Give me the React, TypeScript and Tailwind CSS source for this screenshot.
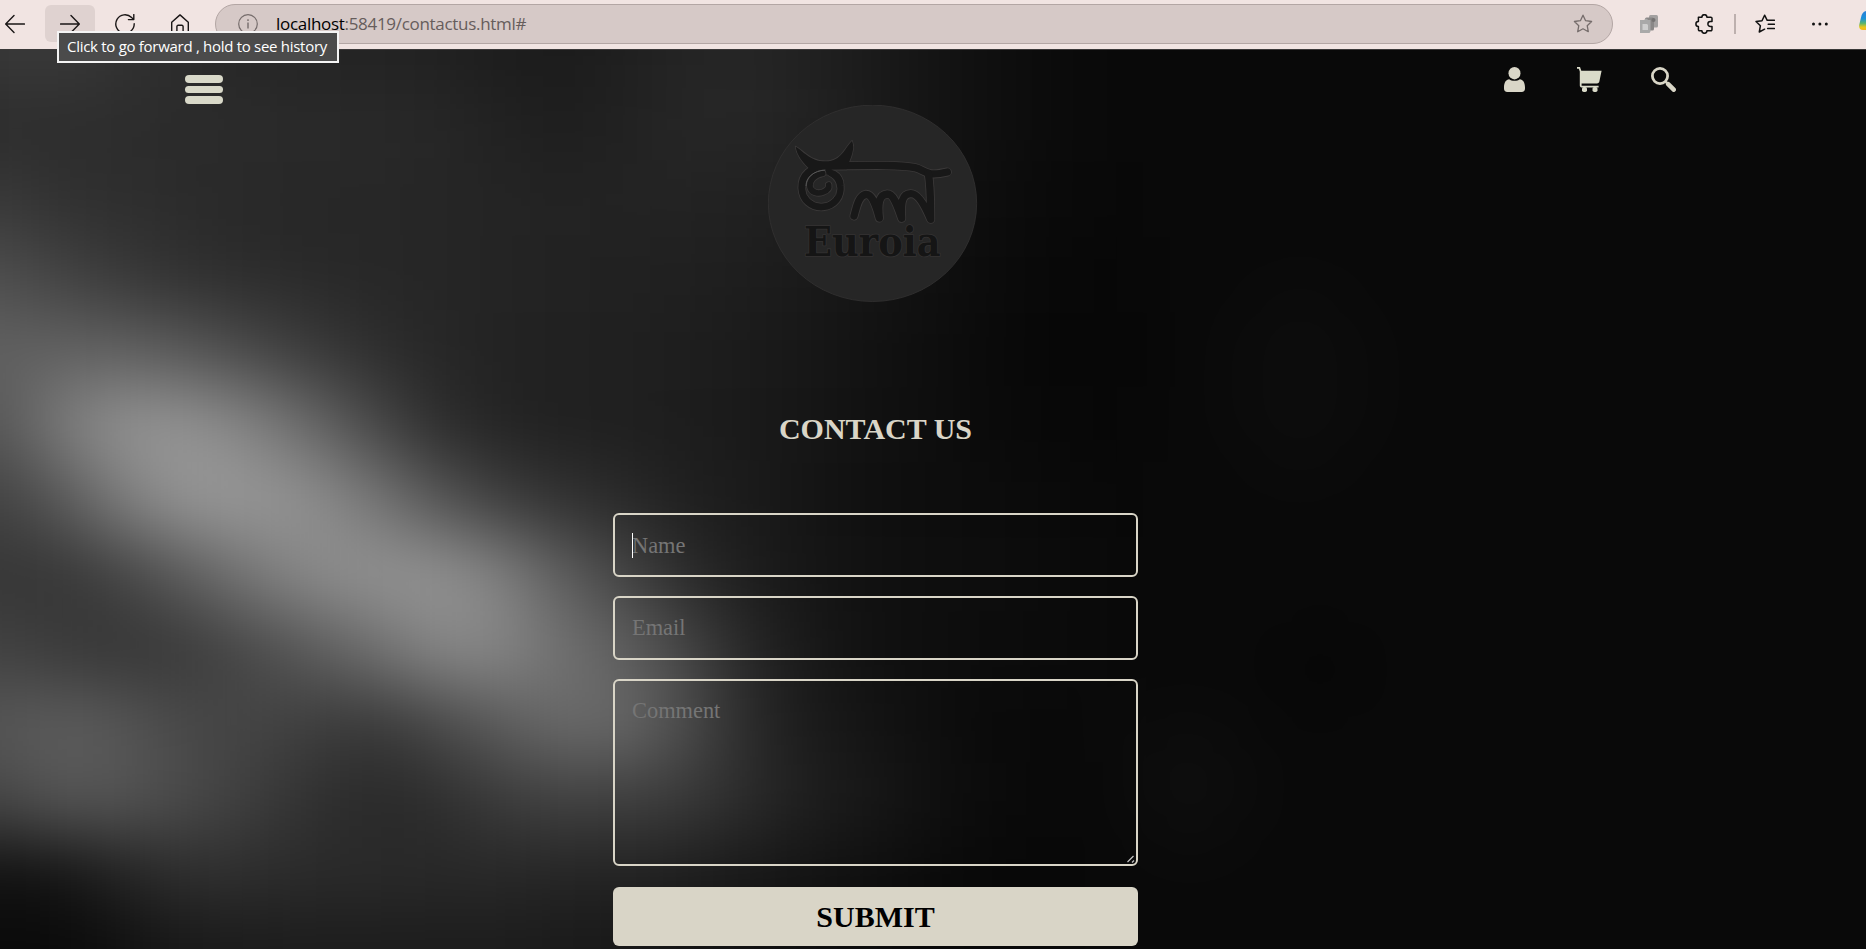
import React from "react";

const CELL_W = 62;
const CELL_H = 75;

// Brightness samples of the out-of-focus backdrop, one row per 75px, one column per 62px.
const SHADES: number[][] = [
  [56, 58, 50, 44, 38, 36, 35, 33, 29, 27, 31, 36, 38, 33, 27, 20, 15, 11, 9],
  [44, 46, 44, 43, 43, 42, 41, 39, 34, 30, 33, 38, 39, 34, 27, 20, 15, 11, 9],
  [57, 48, 46, 43, 40, 39, 39, 38, 36, 35, 35, 35, 33, 30, 24, 18, 13, 10, 8],
  [78, 66, 56, 48, 44, 41, 39, 38, 36, 34, 33, 32, 30, 26, 21, 16, 11, 8, 7],
  [97, 97, 96, 87, 72, 58, 46, 39, 35, 33, 32, 30, 27, 23, 18, 14, 10, 7, 6],
  [86, 124, 147, 148, 132, 105, 73, 46, 36, 32, 31, 29, 26, 22, 17, 14, 10, 8, 7],
  [66, 88, 126, 150, 152, 144, 120, 88, 63, 50, 42, 32, 27, 21, 16, 13, 12, 10, 8],
  [54, 54, 68, 92, 118, 138, 146, 147, 132, 96, 70, 44, 30, 22, 17, 14, 13, 11, 9],
  [66, 58, 53, 58, 72, 90, 110, 134, 136, 114, 97, 72, 40, 25, 17, 14, 12, 11, 9],
  [86, 94, 86, 72, 68, 62, 56, 70, 90, 105, 105, 78, 44, 27, 20, 14, 10, 9, 10],
  [70, 86, 84, 74, 62, 49, 41, 45, 58, 65, 63, 58, 44, 31, 24, 16, 11, 8, 9],
  [17, 20, 35, 46, 46, 42, 42, 40, 40, 37, 35, 30, 25, 20, 15, 11, 8, 8, 9],
  [10, 10, 16, 24, 27, 28, 28, 28, 28, 26, 24, 20, 17, 14, 11, 9, 8, 8, 9],
];

function Backdrop() {
  return (
    <svg
      className="absolute inset-0 h-full w-full"
      viewBox="0 0 1866 900"
      preserveAspectRatio="none"
      aria-hidden="true"
    >
      <defs>
        <filter
          id="soft"
          filterUnits="userSpaceOnUse"
          x="-200"
          y="-200"
          width="2266"
          height="1300"
          colorInterpolationFilters="sRGB"
        >
          <feGaussianBlur stdDeviation="33" />
        </filter>
      </defs>
      <rect width="1866" height="900" fill="#090909" />
      <g filter="url(#soft)" shapeRendering="crispEdges">
        <rect x="-200" y="-200" width="2266" height="1300" fill="#090909" />
        {SHADES.map((row, r) =>
          row.map((v, c) => {
            const x = c === 0 ? -200 : c * CELL_W - CELL_W / 2;
            const right = c * CELL_W + CELL_W / 2;
            const y = r === 0 ? -200 : r * CELL_H - CELL_H / 2;
            const bottom = r === SHADES.length - 1 ? 1100 : r * CELL_H + CELL_H / 2;
            return (
              <rect
                key={r + "-" + c}
                x={x}
                y={y}
                width={right - x + 1}
                height={bottom - y + 1}
                fill={`rgb(${v},${v},${v})`}
              />
            );
          }),
        )}
        <ellipse cx="1300" cy="330" rx="70" ry="100" fill="#0c0c0c" />
        <ellipse cx="1190" cy="735" rx="60" ry="70" fill="#0d0d0d" />
        <ellipse cx="1320" cy="620" rx="50" ry="50" fill="#070707" />
      </g>
    </svg>
  );
}

function ArrowIcon({ flip = false }: { flip?: boolean }) {
  return (
    <svg
      width="20"
      height="20"
      viewBox="0 0 20 20"
      fill="none"
      stroke="#1a1616"
      strokeWidth="1.4"
      strokeLinecap="round"
      strokeLinejoin="round"
      className={flip ? "rotate-180" : ""}
    >
      <path d="M19.4 10H.8M9 1.6L.7 10L9 18.4" />
    </svg>
  );
}

function StarPath() {
  return (
    <path d="M10 1.2l2.6 5.5 6 .8-4.4 4.2 1.1 6L10 14.8l-5.3 2.9 1.1-6L1.4 7.5l6-.8z" />
  );
}

function BrowserBar() {
  return (
    <div className="relative z-10 flex h-[49px] shrink-0 items-start overflow-hidden bg-[#f1e4e2]">
      <div className="mt-[14px] ml-[5px] h-5 w-5">
        <ArrowIcon />
      </div>
      <div className="mt-[5px] ml-5 flex h-[37px] w-[50px] justify-center rounded-md bg-[#dfd2d0] pt-[9px]">
        <ArrowIcon flip />
      </div>
      <svg
        className="mt-[14px] ml-5"
        width="20"
        height="20"
        viewBox="0 0 20 20"
        fill="none"
        stroke="#1a1616"
        strokeWidth="1.4"
        strokeLinecap="round"
        strokeLinejoin="round"
      >
        <path d="M19.2 9.8A9.2 9.2 0 1 1 16.6 3.6L18.6 5.4M18.8.6V5.6H13.4" />
      </svg>
      <svg
        className="mt-[14px] ml-[35px]"
        width="20"
        height="20"
        viewBox="0 0 20 20"
        fill="none"
        stroke="#1a1616"
        strokeWidth="1.4"
        strokeLinejoin="round"
      >
        <path d="M1.7 8.2L10 .9l8.3 7.3V18.5h-5.2v-6a1.2 1.2 0 0 0-1.2-1.2H8.1A1.2 1.2 0 0 0 6.9 12.500v6H1.700z" />
      </svg>
      <div className="mt-1 ml-[25px] flex h-10 w-[1398px] items-center rounded-full border border-[#b3a6a4] bg-[#d6c9c7] pr-[19px] pl-[22px]">
        <svg
          width="20"
          height="20"
          viewBox="0 0 20 20"
          fill="none"
          stroke="#756c6b"
          strokeWidth="1.2"
        >
          <circle cx="10" cy="10" r="9.3" />
          <path d="M10 8.600v6M10 5.300v1.600" strokeWidth="1.4" />
        </svg>
        <div
          className="ml-[18px] grow text-[17px] leading-6 tracking-[-0.3px] whitespace-nowrap text-[#665d5c]"
          style={{ fontFamily: '"Open Sans", sans-serif' }}
        >
          <span className="text-black">localhost</span>:58419/contactus.html#
        </div>
        <svg
          width="20"
          height="20"
          viewBox="0 0 20 20"
          fill="none"
          stroke="#756c6b"
          strokeWidth="1.300"
          strokeLinejoin="round"
        >
          <StarPath />
        </svg>
      </div>
      <svg className="mt-[15px] ml-[27px]" width="18" height="18" viewBox="0 0 18 18">
        <rect x="9" y="0" width="9" height="12.500" rx="1.500" fill="#a3a0a0" />
        <rect x="5" y="2.500" width="9" height="13" rx="1.500" fill="#8a8787" />
        <circle cx="13.500" cy="5" r="2" fill="#757272" />
        <path d="M0 5H4L5.500 3.800H7L8 5H10.500V16.500L9.500 18H0Z" fill="#a9a9a9" />
        <path d="M2.500 9H7L8 10V15H2.500Z" fill="#cfcfcf" />
      </svg>
      <svg
        className="mt-[14px] ml-[36px]"
        width="20"
        height="20"
        viewBox="0 0 20 20"
        fill="none"
        stroke="#111"
        strokeWidth="1.500"
        strokeLinejoin="round"
      >
        <path d="M4.400 3.200H7.900A2.500 2.500 0 0 1 12.900 3.200H16.800A1.200 1.200 0 0 1 18 4.400V7.600H16.300A2.400 2.400 0 0 0 16.300 12.400H18V15.600A1.200 1.200 0 0 1 16.800 16.800H12.900A2.500 2.500 0 0 1 7.900 16.800H5.600A1.200 1.200 0 0 1 4.400 15.600V12.500A2.500 2.500 0 0 1 4.400 7.500Z" />
      </svg>
      <div className="mt-[14px] ml-[20px] h-5 w-[2px] bg-[#bdb0ae]" />
      <svg
        className="mt-[14px] ml-[19px]"
        width="20"
        height="20"
        viewBox="0 0 20 20"
        fill="none"
        stroke="#111"
        strokeWidth="1.500"
        strokeLinecap="round"
        strokeLinejoin="round"
      >
        <path d="M12.200 6.300L9.600 1.200 7 6.700 1 7.500 5.400 11.700 4.300 18 9.600 15.200M13.200 10.300H19.400M12.200 6.300H19.400M12.600 14.400H19.400" />
      </svg>
      <svg className="mt-[14px] ml-[36px]" width="18" height="20" viewBox="0 0 18 20" fill="#111">
        <circle cx="2.500" cy="10" r="1.500" />
        <circle cx="8.900" cy="10" r="1.500" />
        <circle cx="15.300" cy="10" r="1.500" />
      </svg>
      <svg className="mt-[10px] ml-[30px] shrink-0" width="7" height="21" viewBox="0 0 7 21">
        <defs>
          <linearGradient id="assist" x1="0" y1="0" x2="0" y2="1">
            <stop offset="0" stopColor="#2b7fd8" />
            <stop offset=".4" stopColor="#1c92d8" />
            <stop offset=".65" stopColor="#5ab56e" />
            <stop offset=".85" stopColor="#e8c61c" />
            <stop offset="1" stopColor="#f5b81a" />
          </linearGradient>
        </defs>
        <path d="M7 1C4 1.500 2.800 4 2 7.500L.3 14.500C-.4 18 .8 19.800 4 20H7Z" fill="url(#assist)" />
      </svg>
    </div>
  );
}

function Logo() {
  const ram = (
    <>
      <path d="M231 228C360 226 455 224 495 233C528 241 525 262 592 246" />
      <path d="M535 250C543 300 541 340 542 388C522 340 502 310 482 311C455 312 452 340 455 385C440 340 430 312 412 312C385 314 384 345 388 384C376 340 366 312 347 313C325 318 320 350 312 378" />
      <path d="M235 232C180 228 155 258 156 294C158 330 185 352 218 350C255 347 273 318 270 286C268 252 240 246 218 248" />
    </>
  );
  const spiral =
    "M218 250C192 254 176 274 180 291C184 309 206 312 220 306C232 301 238 294 236 285";
  const horns =
    "M137 170C160 182 180 215 228 214C275 214 285 172 306 153C316 175 302 205 296 220L290 238H180C160 220 140 195 137 170Z";
  return (
    <svg width="210" height="198" viewBox="54 45 630 594" fill="none" className="ml-[768px] block">
      <ellipse cx="367.500" cy="340" rx="312.500" ry="294.500" fill="#262626" stroke="#323131" strokeWidth="2.500" />
      <g stroke="#3b3939" strokeWidth="27" strokeLinecap="round" strokeLinejoin="round">
        {ram}
        <path d={horns} strokeWidth="5" />
      </g>
      <g stroke="#181818" strokeWidth="22" strokeLinecap="round" strokeLinejoin="round">
        {ram}
      </g>
      <path d={horns} fill="#181818" />
      <ellipse cx="214" cy="296" rx="47" ry="44" fill="#262626" stroke="#3b3939" strokeWidth="2.500" />
      <g strokeLinecap="round" strokeLinejoin="round">
        <path d={spiral} stroke="#3b3939" strokeWidth="22" />
        <path d={spiral} stroke="#191919" strokeWidth="17" />
      </g>
      <path d="M168 288C168 262 190 243 226 240" stroke="#585858" strokeWidth="3" />
      <text
        x="162"
        y="497"
        textLength="410"
        lengthAdjust="spacingAndGlyphs"
        style={{ fontFamily: '"DejaVu Serif", serif', paintOrder: "stroke" }}
        fontWeight="700"
        fontSize="121"
        fill="#151515"
        stroke="#343232"
        strokeWidth="5"
        strokeLinejoin="round"
      >
        Euroia
      </text>
    </svg>
  );
}

function SiteNav() {
  return (
    <header className="flex h-[55px] items-start justify-between pr-[190px] pl-[185px]">
      <button className="mt-[25px] flex w-[38px] flex-col gap-[3px]" aria-label="Menu">
        <span className="h-[7.500px] w-full rounded-full bg-[#d9d9c9]" />
        <span className="h-[7.500px] w-full rounded-full bg-[#d9d9c9]" />
        <span className="h-[7.500px] w-full rounded-full bg-[#d9d9c9]" />
      </button>
      <div className="mt-[17px] flex">
        <svg width="21" height="25" viewBox="0 0 21 25" fill="#d9d6c7">
          <ellipse cx="10.500" cy="6.200" rx="6" ry="6.200" />
          <path d="M5.200 12.200C7.500 14.300 13.500 14.300 15.800 12.200C19 12.400 21 15.500 21 20.500V21.600A3.400 3.400 0 0 1 17.600 25H3.400A3.400 3.400 0 0 1 0 21.600V20.500C0 15.500 2 12.400 5.200 12.200Z" />
        </svg>
        <svg className="ml-[52px]" width="25" height="25" viewBox="0 0 25 25" fill="#dadbc9">
          <path d="M0 0H3L4.300 3.700H24.600L22.400 14.300C22.200 15.600 21.400 16.400 20 16.400H4.600V18.800H21.600V20.400H4.600C3.400 20.400 2.800 19.800 2.800 18.600V4.500L1.800 1.800H0Z" />
          <rect x="5" y="20" width="5" height="5" rx="1.800" />
          <rect x="15.500" y="20" width="5" height="5" rx="1.800" />
        </svg>
        <svg
          className="ml-[49px]"
          width="25"
          height="25"
          viewBox="0 0 25 25"
          fill="none"
          stroke="#d9d6c7"
          strokeLinecap="round"
        >
          <circle cx="9" cy="9" r="7.600" strokeWidth="2.800" />
          <path d="M14.600 14.600L17 17" strokeWidth="2.500" />
          <path d="M17.200 17.200L22.700 22.700" strokeWidth="4.500" />
        </svg>
      </div>
    </header>
  );
}

function ContactForm() {
  return (
    <form className="ml-[613px] flex w-[525px] flex-col">
      <div className="relative">
        <input
          type="text"
          placeholder="Name"
          className="block h-16 w-full rounded-md border-2 border-[#d9d5c7] bg-transparent px-[17px] pt-[2px] text-[22.400px] placeholder:text-[#757575]"
        />
        <span className="absolute top-5 left-[17px] h-[25px] w-px translate-x-[2px] bg-white" />
      </div>
      <input
        type="email"
        placeholder="Email"
        className="mt-[19px] block h-16 w-full rounded-md border-2 border-[#d9d5c7] bg-transparent px-[17px] text-[22.400px] placeholder:text-[#757575]"
      />
      <div className="relative mt-[19px]">
        <textarea
          placeholder="Comment"
          className="block h-[187px] w-full resize-none rounded-md border-2 border-[#d9d5c7] bg-transparent px-[17px] pt-[17px] text-[22.400px] leading-[26px] placeholder:text-[#757575]"
        />
        <svg
          className="absolute right-[3px] bottom-[3px]"
          width="8"
          height="8"
          viewBox="0 0 8 8"
          stroke="#c4c4c4"
          strokeWidth="1.200"
        >
          <path d="M.5 7L6.500 1M5 7.500L7 5.500" />
        </svg>
      </div>
      <button
        type="button"
        className="mt-[21px] h-[59px] w-full rounded-md bg-[#d9d5c7] text-[30px] leading-none font-bold text-black"
      >
        SUBMIT
      </button>
    </form>
  );
}

export default function App() {
  return (
    <div className="relative flex h-[949px] w-[1866px] flex-col overflow-hidden bg-[#090909]">
      <BrowserBar />
      <main
        className="relative h-[900px] overflow-hidden border-t border-[#3a3838]"
        style={{ fontFamily: '"Liberation Serif", serif' }}
      >
        <Backdrop />
        <div className="relative">
          <SiteNav />
          <Logo />
          <h1 className="mt-[108px] mb-[66px] ml-[613px] w-[525px] text-center text-[30px] leading-9 font-bold text-[#d9d5c7]">
            CONTACT US
          </h1>
          <ContactForm />
        </div>
      </main>
      <div
        className="absolute top-[31px] left-[57px] z-20 flex h-8 w-[282px] items-center border-2 border-[#f4f4f4] bg-[#4b4b4b] pb-px pl-2 text-[15px] tracking-[-0.29px] whitespace-nowrap text-white"
        style={{ fontFamily: '"Open Sans", sans-serif' }}
      >
        Click to go forward , hold to see history
      </div>
    </div>
  );
}
